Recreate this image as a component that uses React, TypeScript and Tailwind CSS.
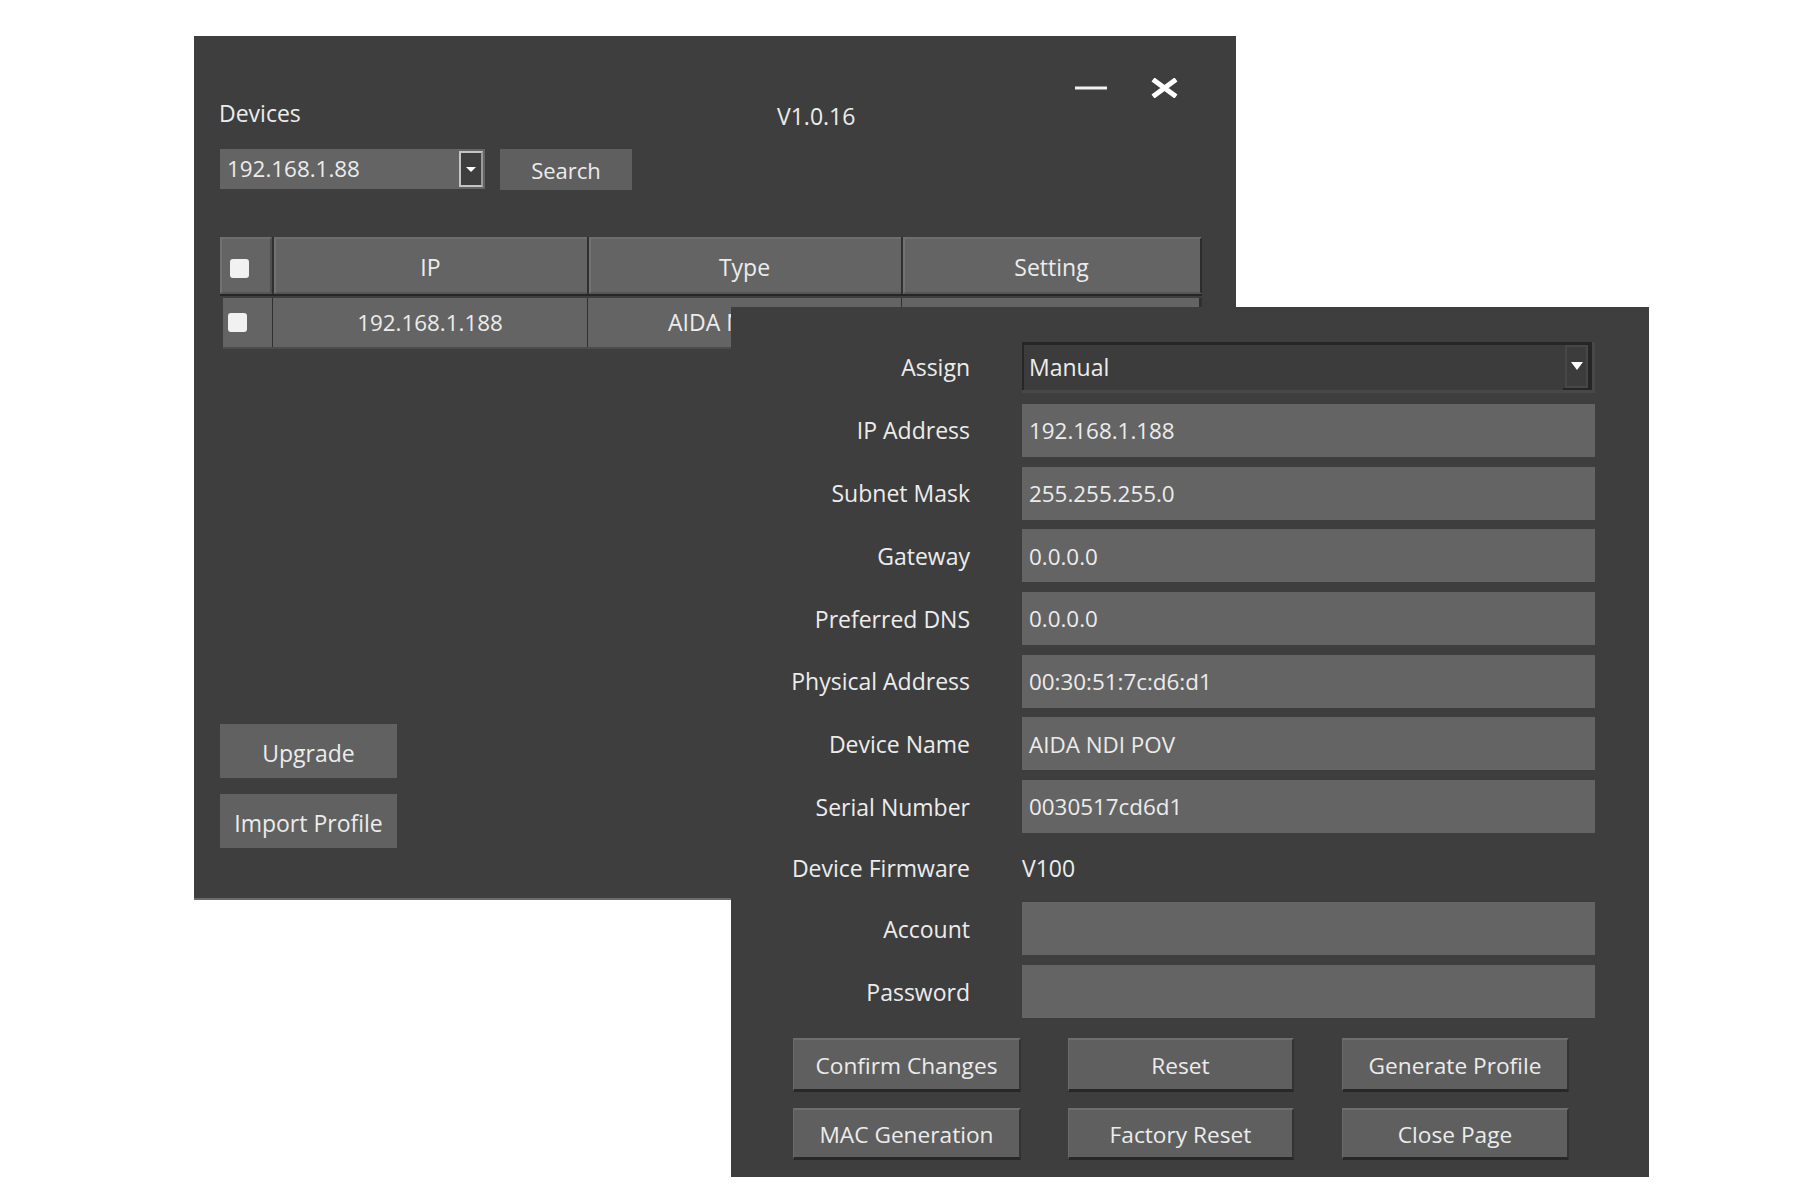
const fields = [
  { label: "IP Address", value: "192.168.1.188" },
  { label: "Subnet Mask", value: "255.255.255.0" },
  { label: "Gateway", value: "0.0.0.0" },
  { label: "Preferred DNS", value: "0.0.0.0" },
  { label: "Physical Address", value: "00:30:51:7c:d6:d1" },
  { label: "Device Name", value: "AIDA NDI POV" },
  { label: "Serial Number", value: "0030517cd6d1" },
]

function Label({ children, className = "" }: { children: string; className?: string }) {
  return <div className={`w-[239px] shrink-0 text-right leading-[30px] ${className}`}>{children}</div>
}

function Field({ label, value }: { label: string; value?: string }) {
  return (
    <div className="flex h-[53px] items-center">
      <Label>{label}</Label>
      <div className="ml-[52px] flex h-full w-[573px] items-center bg-[#646464] pl-[7px] pt-[1px] text-[22.4px]">{value}</div>
    </div>
  )
}

function ActionButton({ label, className }: { label: string; className: string }) {
  return (
    <button className={`flex h-full items-center justify-center border-t-2 border-b-[3px] border-l border-r-2 border-t-[#6e6e6e] border-b-[#282828] border-l-[#6a6a6a] border-r-[#333333] bg-[#5f5f5f] pt-[3px] text-[22.7px] ${className}`}>
      {label}
    </button>
  )
}

function Cell({ className, children }: { className: string; children?: React.ReactNode }) {
  return <div className={`flex h-full items-center justify-center bg-[#646464] ${className}`}>{children}</div>
}

function Check({ className }: { className: string }) {
  return <div className={`h-[19px] w-[19px] rounded-[3px] bg-[#f1f1f1] ${className}`} />
}

export default function App() {
  return (
    <div className="relative h-[1200px] w-[1800px] overflow-hidden bg-white font-['Open_Sans',sans-serif] text-[23px] text-[#ececec]">
      {/* --- Devices window --- */}
      <div className="absolute left-[194px] top-[36px] flex h-[864px] w-[1042px] flex-col border-b-2 border-b-[#6d6a6a] bg-[#3e3e3e] pl-[26px] pb-[50px]">
        <div className="flex h-[112px] items-start">
          <div className="ml-[-1px] mt-[62px] w-[558px] leading-[30px]">Devices</div>
          <div className="mt-[65px] w-[79px] whitespace-nowrap leading-[30px]">V1.0.16</div>
          <svg className="ml-[219px] mt-[50px] h-[4px] w-[32px]" viewBox="0 0 32 4">
            <rect width="32" height="3" y="0.5" fill="#f2f2f2" />
          </svg>
          <svg className="ml-[44px] mt-[42px] h-[20px] w-[27px]" viewBox="0 0 27 20">
            <path d="M2 1.5 L25 18.5 M25 1.5 L2 18.5" stroke="#ffffff" strokeWidth="5" />
          </svg>
        </div>

        <div className="flex h-[42px] items-start">
          <div className="mt-[1px] flex h-[40px] w-[265px] items-center justify-between bg-[#646464] pl-[7px] pr-[2px] text-[22.4px]">
            <span>192.168.1.88</span>
            <div className="flex h-[36px] w-[24px] items-center justify-center border-2 border-[#c4c4c4] border-r-[#9a9a9a] bg-[#3e3e3e]">
              <div className="h-0 w-0 border-x-[5px] border-t-[5px] border-x-transparent border-t-white" />
            </div>
          </div>
          <div className="ml-[15px] mt-[1px] flex h-[41px] w-[132px] items-center justify-center bg-[#5f5f5f] pt-[2px] text-[22px]">Search</div>
        </div>

        <div className="mt-[47px] w-[982px]">
          <div className="flex h-[59px] gap-[2px] border-b-2 border-b-[#262626] bg-[#303030]">
            <Cell className="w-[52px] border-l-2 border-r-2 border-t-2 border-b-2 border-l-[#727272] border-r-[#4e4e4e] border-t-[#6e6e6e] border-b-[#555555]"><Check className="ml-[-13px] mt-[5px]" /></Cell>
            <Cell className="w-[313px] border-l-2 border-t-2 border-b-2 border-l-[#727272] border-t-[#6e6e6e] border-b-[#555555] pr-[2px] pt-[4px]">IP</Cell>
            <Cell className="w-[312px] border-l-2 border-t-2 border-b-2 border-l-[#727272] border-t-[#6e6e6e] border-b-[#555555] pr-[3px] pt-[4px]">Type</Cell>
            <Cell className="w-[299px] border-l-2 border-t-2 border-r-2 border-l-[#727272] border-t-[#6e6e6e] border-r-[#2c2c2c] border-b-2 border-b-[#555555] pr-[2px] pt-[4px]">Setting</Cell>
          </div>
          <div className="ml-[3px] mt-[2px] flex h-[51px] gap-[1px] border-b-2 border-b-[#4c4c4c] bg-[#303030]">
            <Cell className="w-[49px]"><Check className="ml-[-21px]" /></Cell>
            <Cell className="w-[314px] text-[22.4px]">192.168.1.188</Cell>
            <Cell className="w-[313px] justify-start whitespace-nowrap pl-[80px]">AIDA NDI POV</Cell>
            <Cell className="w-[297px]" />
          </div>
        </div>

        <div className="mt-auto flex w-[177px] flex-col gap-[16px]">
          <div className="flex h-[54px] items-center justify-center bg-[#616161] pt-[4px]">Upgrade</div>
          <div className="flex h-[54px] items-center justify-center bg-[#616161] pt-[4px]">Import Profile</div>
        </div>
      </div>

      {/* --- Network settings window --- */}
      <div className="absolute left-[731px] top-[307px] flex h-[870px] w-[918px] flex-col bg-[#3e3e3e] pt-[35px]">
        <div className="flex flex-col gap-[9.7px]">
          <div className="flex h-[52.3px] items-start">
            <Label className="mt-[10px]">Assign</Label>
            <div className="ml-[52px] h-[51px] w-[573px] bg-[#484848] pb-[3px] pr-[3px]">
              <div className="flex h-full items-center justify-between border-l-2 border-r-4 border-t-[3px] border-l-[#262626] border-r-[#262626] border-t-[#262626] bg-[#3c3c3c] pl-[5px]">
                <span className="mb-[1px]">Manual</span>
                <div className="flex h-full w-[25px] justify-end border-b-[2px] border-b-[#262626]">
                  <div className="flex h-full w-[23px] items-center justify-center border-2 border-[#474747] pb-[2px]">
                    <div className="h-0 w-0 border-x-[6px] border-t-[8px] border-x-transparent border-t-white" />
                  </div>
                </div>
              </div>
            </div>
          </div>
          {fields.map((f) => (
            <Field key={f.label} label={f.label} value={f.value} />
          ))}
          <div className="flex h-[50px] items-center">
            <Label>Device Firmware</Label>
            <div className="ml-[52px]">V100</div>
          </div>
          <Field label="Account" />
          <Field label="Password" />
        </div>

        <div className="mt-[20px] flex h-[54px] pl-[61px]">
          <ActionButton label="Confirm Changes" className="ml-[1px] w-[228px]" />
          <ActionButton label="Reset" className="ml-[47px] w-[226px]" />
          <ActionButton label="Generate Profile" className="ml-[48px] w-[227px]" />
        </div>
        <div className="mt-[16px] flex h-[52px] pl-[61px]">
          <ActionButton label="MAC Generation" className="ml-[1px] w-[228px]" />
          <ActionButton label="Factory Reset" className="ml-[47px] w-[226px]" />
          <ActionButton label="Close Page" className="ml-[48px] w-[227px]" />
        </div>
      </div>
    </div>
  )
}
